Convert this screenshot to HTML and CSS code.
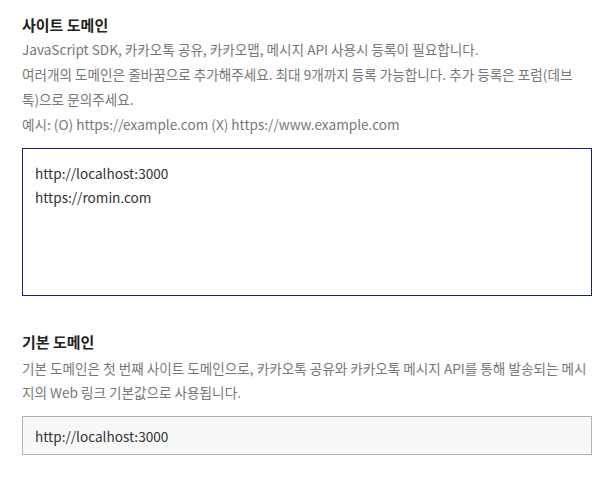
FILE: index.html
```html
<!DOCTYPE html>
<html>
<head lang="ko">
    <meta charset="UTF-8">
    <title>도메인 설정</title>
    <link rel="stylesheet" href="styles.css">
</head>
<body>
<div id="settings">
    <div class="field">
        <h3 class="field-title">사이트 도메인</h3>
        <p class="field-desc desc-narrow">JavaScript SDK, 카카오톡 공유, 카카오맵, 메시지 API 사용시 등록이 필요합니다.<br>여러개의 도메인은 줄바꿈으로 추가해주세요. 최대 9개까지 등록 가능합니다. 추가 등록은 포럼(데브톡)으로 문의주세요.<br>예시: (O) https://example.com (X) https://www.example.com</p>
        <textarea class="field-area">http://localhost:3000
https://romin.com</textarea>
    </div>
    <div class="field field-second">
        <h3 class="field-title">기본 도메인</h3>
        <p class="field-desc desc-tight">기본 도메인은 첫 번째 사이트 도메인으로, 카카오톡 공유와 카카오톡 메시지 API를 통해 발송되는 메시지의 Web 링크 기본값으로 사용됩니다.</p>
        <input class="field-input" type="text" value="http://localhost:3000" readonly>
    </div>
</div>
</body>
</html>
```

FILE: styles.css
```css
*{
    margin: 0;
    padding: 0;
    box-sizing: border-box;
}
body{
    background: #fff;
    font-family: "Noto Sans CJK KR", "Noto Sans", sans-serif;
    color: #222;
}
#settings{
    padding: 13px 21px 0 22px;
}
.field-title{
    font-size: 15px;
    font-weight: 700;
    line-height: 24px;
    color: #222;
}
.field-desc{
    font-size: 13.6px;
    line-height: 25px;
    color: #777;
}
.desc-narrow{
    max-width: 560px;
}
.desc-tight{
    margin-top: 2px;
    line-height: 24px;
}
.field-area{
    display: block;
    width: 100%;
    height: 148px;
    margin-top: 11px;
    padding: 12px 12px;
    border: 1px solid #16246e;
    outline: none;
    resize: none;
    font-family: "Noto Sans CJK KR", "Noto Sans", sans-serif;
    font-size: 13.6px;
    line-height: 24px;
    color: #333;
    background: #fff;
}
.field-second{
    margin-top: 34px;
}
.field-input{
    display: block;
    width: 100%;
    height: 39px;
    margin-top: 12px;
    padding: 0 12px;
    border: 1px solid #b1b1b1;
    outline: none;
    font-family: "Noto Sans CJK KR", "Noto Sans", sans-serif;
    font-size: 13.6px;
    color: #333;
    background: #f7f8f8;
}
```
